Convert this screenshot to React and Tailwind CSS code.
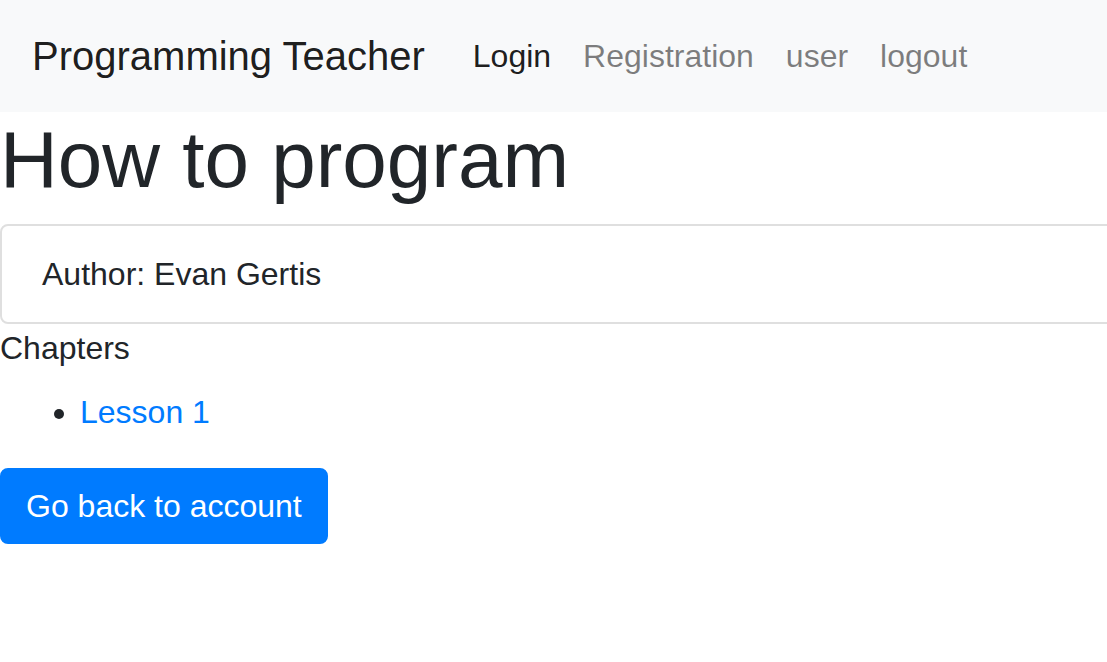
export default function App() {
  return (
    <div className="min-h-[662px] overflow-hidden bg-white text-[#212529]" style={{ fontFamily: '"Liberation Sans", Arial, sans-serif' }}>
      <nav className="flex items-center bg-[#f8f9fa] px-[32px] py-[16px]">
        <a className="mr-[32px] py-[10px] text-[40px] leading-[60px] text-black/90 whitespace-nowrap">Programming Teacher</a>
        <ul className="flex items-center">
          <li><a className="block px-[16px] py-[8px] text-[32px] leading-[48px] text-black/90">Login</a></li>
          <li><a className="block px-[16px] py-[8px] text-[32px] leading-[48px] text-black/50">Registration</a></li>
          <li><a className="block px-[16px] py-[8px] text-[32px] leading-[48px] text-black/50">user</a></li>
          <li><a className="block px-[16px] py-[8px] text-[32px] leading-[48px] text-black/50">logout</a></li>
        </ul>
      </nav>
      <h1 className="mb-[16px] text-[80px] font-normal leading-[96px] whitespace-nowrap">How to program</h1>
      <div className="w-[1140px] rounded-[8px] border-2 border-[#dfdfdf] px-[40px] py-[24px] text-[32px] leading-[48px]">
        Author: Evan Gertis
      </div>
      <div className="text-[32px] leading-[48px]">Chapters</div>
      <ul className="mt-[16px] mb-[32px] list-disc pl-[80px] text-[32px] leading-[48px]">
        <li><a className="text-[#007bff]">Lesson 1</a></li>
      </ul>
      <button className="rounded-[8px] border-2 border-[#007bff] bg-[#007bff] px-[24px] py-[12px] text-[32px] leading-[48px] text-white whitespace-nowrap">
        Go back to account
      </button>
    </div>
  );
}
